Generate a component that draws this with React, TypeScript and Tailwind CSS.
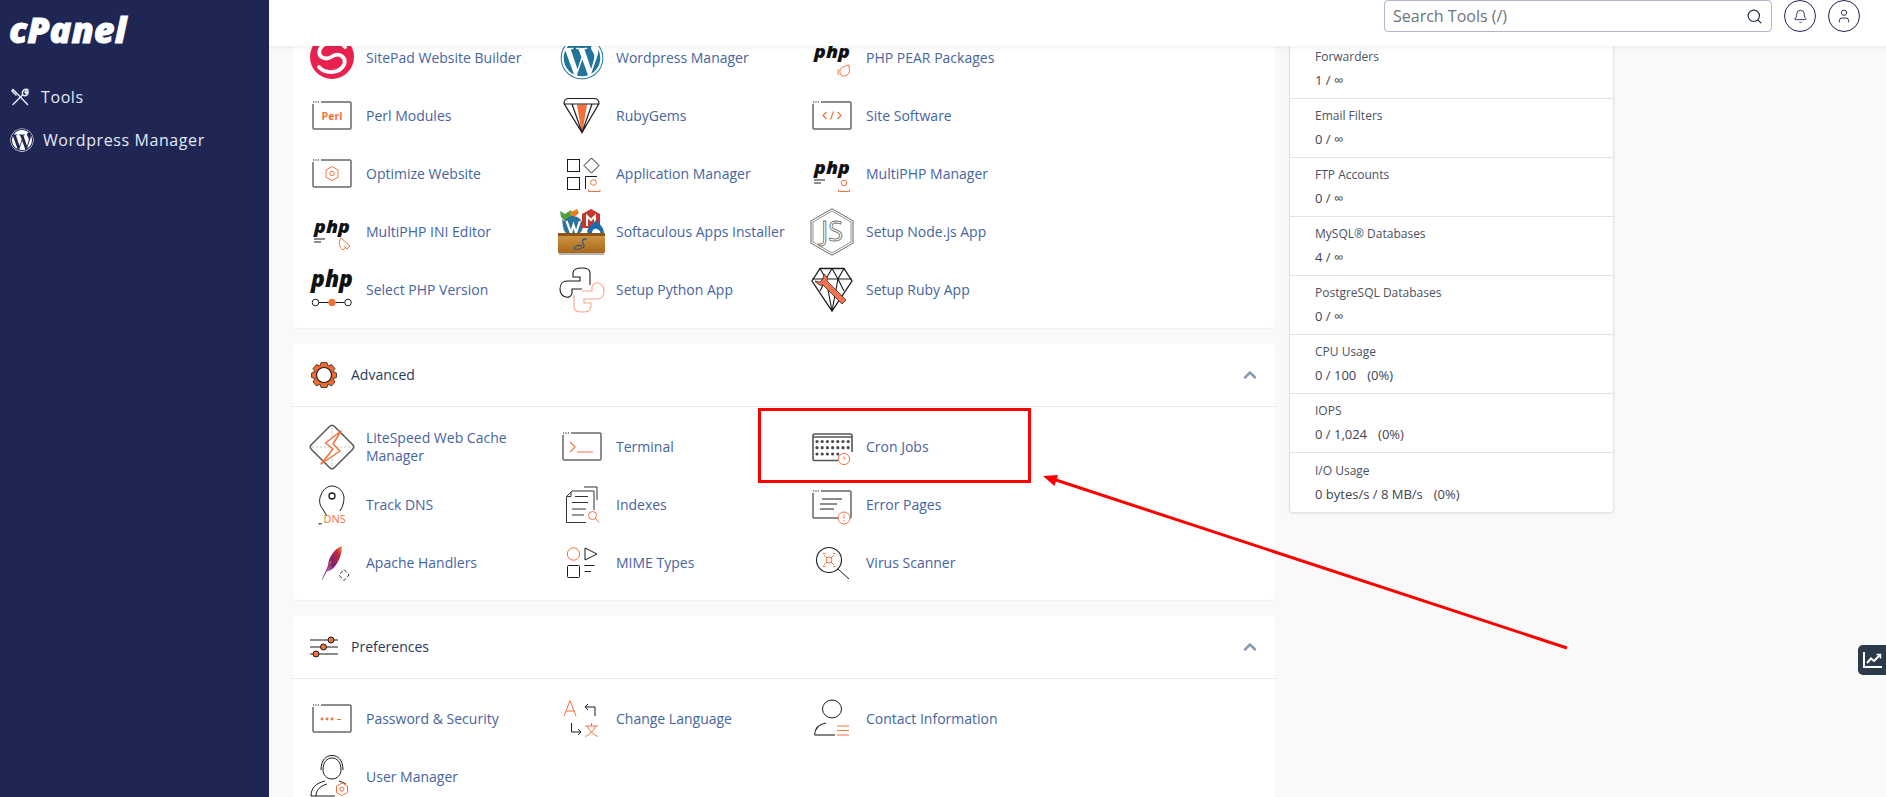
import { Bell, ChevronUp, Search, User } from "lucide-react";
import type { ReactNode } from "react";
import { FaWordpress } from "react-icons/fa";

const ORANGE = "#f4713c";
const INK = "#1b1b1b";

function Icon({ children }: { children: ReactNode }) {
  return (
    <svg width="48" height="48" viewBox="0 0 48 48" fill="none" stroke={INK} strokeWidth="1" className="shrink-0">
      {children}
    </svg>
  );
}

// window frame with the three dots at its top left, used by many tools
function WindowIcon({ children }: { children?: ReactNode }) {
  return (
    <Icon>
      <path d="M13 10H42.5Q43 10 43 10.5V36.5Q43 37 42.5 37H5.5Q5 37 5 36.5V12" />
      <path d="M5 10H12" strokeDasharray="1.2 1.2" />
      {children}
    </Icon>
  );
}

function PhpText({ size = 17, width = 36, x = 6, y = 24 }: { size?: number; width?: number; x?: number; y?: number }) {
  return (
    <text x={x} y={y} textLength={width} lengthAdjust="spacingAndGlyphs" fontFamily="'Open Sans', sans-serif" fontStyle="italic" fontWeight="800" fontSize={size} fill="#111" stroke="none">
      php
    </text>
  );
}

const SitePadIcon = () => (
  <Icon>
    <circle cx="24" cy="23" r="22" fill="#e8214f" stroke="none" />
    <path d="M11 33C17 40 31 40 36 31C39 23 31 18 24 22.5C17 27 9 23 12 15C17 6 31 6 37 13" stroke="#fff" strokeWidth="3.800" strokeLinecap="round" />
  </Icon>
);

const WordpressIcon = () => (
  <div className="flex h-12 w-12 shrink-0 items-center justify-center text-[#21759b]">
    <FaWordpress size={44} />
  </div>
);

const PerlIcon = () => (
  <WindowIcon>
    <text x="24" y="27.500" textAnchor="middle" fontFamily="'Open Sans', sans-serif" fontWeight="700" fontSize="10.500" fill={ORANGE} stroke="none">Perl</text>
  </WindowIcon>
);

const RubyGemsIcon = () => (
  <Icon>
    <path d="M19 12.500H29L24.500 40H23.500Z" fill={ORANGE} stroke="none" />
    <path d="M11 6.500H36Q41 6.500 41 11.500L24 40.500L6 11.500Q6 6.500 11 6.500ZM6 12H41M14 12L24 40.500L34 12" strokeWidth="1.200" />
  </Icon>
);

const SoftwareIcon = () => (
  <WindowIcon>
    <path d="M18.500 20L15 23.500L18.500 27M29.500 20L33 23.500L29.500 27M25.500 19.500L22.500 27.500" stroke={ORANGE} strokeWidth="1.200" />
  </WindowIcon>
);

const OptimizeIcon = () => (
  <WindowIcon>
    <path d="M24 16.500L30 20V27L24 30.500L18 27V20Z" stroke={ORANGE} strokeLinejoin="round" />
    <circle cx="24" cy="23.500" r="2.200" stroke={ORANGE} />
  </WindowIcon>
);

const AppManagerIcon = () => (
  <Icon>
    <rect x="9.500" y="9.500" width="12" height="12" />
    <rect x="9.500" y="27.500" width="12" height="12" />
    <path d="M33.500 8L41 15.500L33.500 23L26 15.500Z" />
    <path d="M27.500 39V26.500H39" />
    <circle cx="35.500" cy="32.500" r="2.800" stroke={ORANGE} />
    <path d="M30.500 39.500V41.500H42V39.500" stroke={ORANGE} />
  </Icon>
);

const PearIcon = () => (
  <Icon>
    <PhpText y={24} />
    <path d="M41 31C38 31 37 33 35 33C32 34 31 38 33 41C35 43 39 42 41 39C42 37 41 34 41 31Z" stroke={ORANGE} />
    <path d="M31 35C29.500 37 29.500 39 31 41" stroke={ORANGE} />
  </Icon>
);

const MultiManagerIcon = () => (
  <Icon>
    <PhpText y={24} />
    <path d="M6 30H17M6 33H13" />
    <circle cx="36" cy="33" r="2.800" stroke={ORANGE} />
    <path d="M30.500 39.500V41.500H41.500V39.500" stroke={ORANGE} />
  </Icon>
);

const IniIcon = () => (
  <Icon>
    <PhpText y={25} />
    <path d="M6 31H17M6 34H13" />
    <path d="M33 30L42 38L39 41L36 38M33 30C30 34 31 39 35 42L37 40" stroke={ORANGE} />
  </Icon>
);

const SoftaculousIcon = () => (
  <svg width="48" height="48" viewBox="0 0 48 48" className="shrink-0">
    <defs>
      <linearGradient id="softBox" x1="0" y1="0" x2="0" y2="1">
        <stop offset="0" stopColor="#d49a45" />
        <stop offset="1" stopColor="#a8681d" />
      </linearGradient>
    </defs>
    <path d="M2 3L7 6L13 2L15 8L11 11L7 13L3 9Z" fill="#4da23c" />
    <path d="M11 5L19 1L21 5L15 10Z" fill="#e67d25" />
    <path d="M4 11L8 15L5 19Z" fill="#2d6f9e" />
    <circle cx="15" cy="18" r="10" fill="#2d6f9e" />
    <path d="M8.500 13L13 25L15.500 17L18 25L22 13" fill="none" stroke="#fff" strokeWidth="2.200" />
    <path d="M33 1L42 6V20H24V6Z" fill="#c8352f" />
    <path d="M29 18V8L33 12L37 8V18" fill="none" stroke="#fff" strokeWidth="2" />
    <path d="M30 27C27 19 34 18 38 12C40 15 47 19 46 27Z" fill="#1f6aa8" />
    <path d="M34 25C34 21 37 20 39 21C42 22 43 24 42 26Z" fill="#fff" />
    <rect x="0" y="25" width="47" height="20" rx="1" fill="url(#softBox)" />
    <rect x="0" y="25" width="47" height="3" fill="#8c5516" />
    <rect x="1" y="45" width="45" height="2" fill="#b5b5b5" />
    <path d="M29 31C23 30 24 35 26 37C27 39 22 42 17 41C14 40 19 36 24 38" fill="none" stroke="#33507f" strokeWidth="1.100" />
  </svg>
);

const NodeIcon = () => (
  <Icon>
    <path d="M24 0.800L45 12.800V35.200L24 47.200L3 35.200V12.800Z" stroke="#555" strokeWidth="0.900" strokeLinejoin="round" />
    <path d="M24 3L43 14V34L24 45L5 34V14Z" stroke="#777" strokeWidth="0.800" strokeLinejoin="round" />
    <text x="24" y="33" textAnchor="middle" fontFamily="'Open Sans', sans-serif" fontWeight="400" fontSize="27" stroke="#666" strokeWidth="0.800" fill="#fff">JS</text>
  </Icon>
);

const SelectPhpIcon = () => (
  <Icon>
    <PhpText size={22} width={42} x={3} y={21} />
    <path d="M11 36.500H20.500M27.500 36.500H36.500" />
    <circle cx="7.500" cy="36.500" r="3.300" />
    <circle cx="24" cy="36.500" r="3.300" fill={ORANGE} stroke={ORANGE} />
    <circle cx="40" cy="36.500" r="3.300" />
  </Icon>
);

const PythonIcon = () => (
  <Icon>
    <path d="M24 23H14V27C14 30 10 32 8 31C4 30 2 27 2 23C2 18 5 15 9 15H22V11H15V7C15 4 18 2 24 2C30 2 32 4 32 7V19" strokeWidth="1.100" />
    <path d="M24 25H34V21C34 18 38 16 40 17C44 18 46 21 46 25C46 30 43 33 39 33H26V37H33V41C33 44 30 46 24 46C18 46 16 44 16 41V29" stroke="#f9a58a" strokeWidth="1.100" />
  </Icon>
);

const RubyWrenchIcon = () => (
  <Icon>
    <path d="M12 2.500H36L44 15L24 45L4 15Z" strokeWidth="1.300" />
    <path d="M4 13H44M12 2.500L18 13L24 45L30 13L36 2.500M24 2.500L18 13M24 2.500L30 13M18 13L12 25M30 13L36 25" strokeWidth="1.100" />
    <path d="M16 8C19 10 20 13 19 15L38 34L34 38L15 19C12 20 9 18 7 15L12 16L15 13Z" fill="#f4724f" stroke={INK} strokeWidth="0.700" />
  </Icon>
);

const LiteSpeedIcon = () => (
  <Icon>
    <path d="M3.500 21.500L21.500 3.500Q24 1 26.500 3.500L44.500 21.500Q47 24 44.500 26.500L26.500 44.500Q24 47 21.500 44.500L3.500 26.500Q1 24 3.500 21.500Z" stroke="#555" strokeWidth="1.500" />
    <path d="M4 24H44M24 4V44" stroke="#c8c8c8" strokeDasharray="2.500 1.500" strokeWidth="1.100" />
    <path d="M33 8L17.500 20L25 26L13 41L32 28L25 21Z" fill="#fff" stroke={ORANGE} strokeWidth="1.500" strokeLinejoin="round" />
  </Icon>
);

const TerminalIcon = () => (
  <WindowIcon>
    <path d="M12 19L17 24L12 29M19 29H35" stroke={ORANGE} strokeWidth="1.100" />
  </WindowIcon>
);

const CronIcon = () => (
  <Icon>
    <path d="M5 31V12.500Q5 11 6.500 11H42.500Q44 11 44 12.500V29M5 14H44M5 31V36Q5 37.500 6.500 37.500H30" stroke="#555" strokeWidth="1.600" />
    {[18.5, 24.7, 31].map((cy, row) =>
      [9, 14.2, 19.4, 24.6, 29.800, 35, 40.200].slice(0, row === 2 ? 5 : 7).map((cx) => (
        <circle key={`${cx}-${cy}`} cx={cx} cy={cy} r="1.600" fill="#4a4a4a" stroke="none" />
      )),
    )}
    <circle cx="36" cy="36" r="5.600" fill="#fff" stroke={ORANGE} />
    <path d="M35.500 33.500L37 36.500" stroke={ORANGE} />
  </Icon>
);

const DnsIcon = () => (
  <Icon>
    <path d="M19 35L14 27C11 23 11 18 13 14C15 8 20 5 24 5C29 5 35 9 36 16C36 21 35 25 32 30" />
    <circle cx="24" cy="15" r="3" strokeWidth="1.300" />
    <rect x="10.500" y="42" width="3" height="1.500" fill="#555" stroke="none" />
    <text x="15.500" y="42" fontFamily="'Open Sans', sans-serif" fontSize="11" fill={ORANGE} stroke="none">DNS</text>
  </Icon>
);

const IndexesIcon = () => (
  <Icon>
    <path d="M14 10H36V29M14 10L8.500 15.500V41.500H28" stroke="#333" />
    <path d="M26 6H39V19" stroke="#333" />
    <path d="M17 15.500H30M14 21.500H30M14 28H28M14 34H26M9 15.500H13V11" stroke="#333" />
    <circle cx="34.500" cy="34.500" r="4" stroke={ORANGE} />
    <path d="M37.500 37.500L41 41.500" stroke={ORANGE} />
  </Icon>
);

const ErrorPagesIcon = () => (
  <WindowIcon>
    <path d="M14 18H34M12 23H29M12 28H26" />
    <circle cx="36" cy="37" r="6" fill="#fff" stroke={ORANGE} />
    <path d="M36 33.500V37.500M36 39V40.500" stroke={ORANGE} />
  </WindowIcon>
);

const ApacheIcon = () => (
  <svg width="48" height="48" viewBox="0 0 48 48" className="shrink-0">
    <defs>
      <linearGradient id="feather" x1="1" y1="0" x2="0" y2="1">
        <stop offset="0" stopColor="#f5a623" />
        <stop offset="0.250" stopColor="#c9293c" />
        <stop offset="0.650" stopColor="#7e1f6e" />
        <stop offset="1" stopColor="#a78bc0" />
      </linearGradient>
    </defs>
    <path d="M34 7C26 10 21 18 20 26L18 33L23 31C30 26 34 16 34 7Z" fill="url(#feather)" />
    <path d="M23 22L14 41" stroke="url(#feather)" strokeWidth="1" fill="none" />
    <path d="M36 30.500L41 36L36 41.500L31 36Z" fill="none" stroke="#333" strokeWidth="1" strokeDasharray="4 2" />
  </svg>
);

const MimeIcon = () => (
  <Icon>
    <circle cx="15.500" cy="15" r="6.200" stroke={ORANGE} />
    <path d="M27 9L39 15L27 21Z" />
    <rect x="9.500" y="26.500" width="12" height="12" rx="1" />
    <path d="M26.500 26.500H36.500M26.500 32.500H33" />
  </Icon>
);

const VirusIcon = () => (
  <Icon>
    <circle cx="21" cy="21" r="12.500" strokeWidth="1.100" />
    <path d="M30 30L41 40" />
    <circle cx="21" cy="21" r="3" stroke={ORANGE} />
    <path d="M16 16L19 19M26 16L23 19M16 26L19 23M26 26L23 23M15 14.500H17.500M25 14.500H27.500M15 27.500H17.500M25 27.500H27.500" stroke={ORANGE} />
  </Icon>
);

const PasswordIcon = () => (
  <WindowIcon>
    <circle cx="14" cy="24" r="1.400" fill={ORANGE} stroke="none" />
    <circle cx="19" cy="24" r="1.400" fill={ORANGE} stroke="none" />
    <circle cx="24" cy="24" r="1.400" fill={ORANGE} stroke="none" />
    <path d="M29 24.500H33" stroke={ORANGE} />
  </WindowIcon>
);

const LanguageIcon = () => (
  <Icon>
    <path d="M6 21L12 5.500L18 21M8 16H16" stroke={ORANGE} />
    <path d="M37 21V12H27.500M30 9L27 12L30 15" />
    <path d="M13.500 28V37H23M20 34L23 37L20 40" />
    <path d="M27 31H40M33.500 28V31M29.500 31C31 36 36 40 40 41.500M37.500 31C36 36 31 40 27 41.500" stroke={ORANGE} />
  </Icon>
);

const ContactIcon = () => (
  <Icon>
    <ellipse cx="24" cy="14" rx="9.500" ry="9" />
    <path d="M6.500 40C7 33 12 29 18 28" strokeWidth="1.100" />
    <path d="M6.500 40H27" stroke="#666" strokeWidth="1.600" />
    <path d="M29 31H41M29 35.500H41M29 40H41" stroke={ORANGE} />
  </Icon>
);

const UserManagerIcon = () => (
  <Icon>
    <path d="M15 17C15 9 19 5 24 5C29 5 33 9 33 17C33 21 30 26 24 26C18 26 15 21 15 17Z" />
    <path d="M13 17C13 7 18 2.500 24 2.500C30 2.500 35 7 35 17" />
    <path d="M3 43C3 35 8 30 17 28M8 43C8 37 12 33 19 31M3 43H27M31 28C34 29 36 30 38 31" />
    <path d="M34 30L39.500 33V39.500L34 42.500L28.500 39.500V33Z" fill="#fff" stroke={ORANGE} />
    <circle cx="34" cy="36.200" r="2" stroke={ORANGE} />
  </Icon>
);

type Tool = { name: string; icon: ReactNode };

const softwareTools: Tool[] = [
  { name: "SitePad Website Builder", icon: <SitePadIcon /> },
  { name: "Wordpress Manager", icon: <WordpressIcon /> },
  { name: "PHP PEAR Packages", icon: <PearIcon /> },
  { name: "Perl Modules", icon: <PerlIcon /> },
  { name: "RubyGems", icon: <RubyGemsIcon /> },
  { name: "Site Software", icon: <SoftwareIcon /> },
  { name: "Optimize Website", icon: <OptimizeIcon /> },
  { name: "Application Manager", icon: <AppManagerIcon /> },
  { name: "MultiPHP Manager", icon: <MultiManagerIcon /> },
  { name: "MultiPHP INI Editor", icon: <IniIcon /> },
  { name: "Softaculous Apps Installer", icon: <SoftaculousIcon /> },
  { name: "Setup Node.js App", icon: <NodeIcon /> },
  { name: "Select PHP Version", icon: <SelectPhpIcon /> },
  { name: "Setup Python App", icon: <PythonIcon /> },
  { name: "Setup Ruby App", icon: <RubyWrenchIcon /> },
];

const advancedTools: Tool[] = [
  { name: "LiteSpeed Web Cache Manager", icon: <LiteSpeedIcon /> },
  { name: "Terminal", icon: <TerminalIcon /> },
  { name: "Cron Jobs", icon: <CronIcon /> },
  { name: "Track DNS", icon: <DnsIcon /> },
  { name: "Indexes", icon: <IndexesIcon /> },
  { name: "Error Pages", icon: <ErrorPagesIcon /> },
  { name: "Apache Handlers", icon: <ApacheIcon /> },
  { name: "MIME Types", icon: <MimeIcon /> },
  { name: "Virus Scanner", icon: <VirusIcon /> },
];

const preferenceTools: Tool[] = [
  { name: "Password & Security", icon: <PasswordIcon /> },
  { name: "Change Language", icon: <LanguageIcon /> },
  { name: "Contact Information", icon: <ContactIcon /> },
  { name: "User Manager", icon: <UserManagerIcon /> },
];

const stats = [
  { label: "Forwarders", value: "1 / ∞" },
  { label: "Email Filters", value: "0 / ∞" },
  { label: "FTP Accounts", value: "0 / ∞" },
  { label: "MySQL® Databases", value: "4 / ∞" },
  { label: "PostgreSQL Databases", value: "0 / ∞" },
  { label: "CPU Usage", value: "0 / 100", percent: "(0%)" },
  { label: "IOPS", value: "0 / 1,024", percent: "(0%)" },
  { label: "I/O Usage", value: "0 bytes/s / 8 MB/s", percent: "(0%)" },
];

function ToolGrid({ tools }: { tools: Tool[] }) {
  return (
    <div className="grid grid-cols-[repeat(3,250px)] auto-rows-[58px] px-[15px]">
      {tools.map((tool) => (
        <div key={tool.name} className="flex items-center gap-[10px]">
          {tool.icon}
          <span className="text-sm leading-[18px] text-[#46649f]">{tool.name}</span>
        </div>
      ))}
    </div>
  );
}

function Section({ title, icon, tools }: { title: string; icon: ReactNode; tools: Tool[] }) {
  return (
    <section className="rounded-[4px] bg-white pb-[8px] shadow-[0_1px_2px_rgba(0,0,0,0.04)]">
      <div className="flex h-[63px] items-center border-b border-[#e3e9f0] pl-[17px] pr-[15px]">
        <div className="flex w-[28px] justify-center">{icon}</div>
        <span className="ml-[13px] text-sm text-[#293a5a]">{title}</span>
        <ChevronUp size={20} strokeWidth={3} className="ml-auto text-[#8a9bb5]" />
      </div>
      <div className="pt-[11px]">
        <ToolGrid tools={tools} />
      </div>
    </section>
  );
}

export default function App() {
  return (
    <div className="relative flex h-[797px] w-[1886px] overflow-hidden bg-[#f9f9f9] font-['Open_Sans',sans-serif]">
      <aside className="flex w-[269px] shrink-0 flex-col bg-[#1f2654] pl-[9px]">
        <div className="mt-[11px] h-[64px] text-[36px] font-extrabold italic leading-[38px] tracking-[0px] text-white [-webkit-text-stroke:0.8px_white]">cPanel</div>
        <div className="flex h-[43px] items-center gap-[12px] pl-[2px] text-base tracking-[0.6px] text-[#e3e8f4]">
          <svg width="18" height="18" viewBox="0 0 18 18" fill="none" stroke="#e3e8f4" strokeWidth="1.500" strokeLinecap="round">
            <path d="M2 1.500L6 5.500L16.500 16.500M2 1.500L1 3L5 7" />
            <path d="M2 16.500L11 7.500M12 3C13 1.500 15 1 16.500 1.500L14 4L15 5.500L17 3.500C17.500 5 16.500 7 15 7.500C13 8 12 7 12 7C11 5.500 11 4.500 12 3Z" />
          </svg>
          Tools
        </div>
        <div className="flex h-[43px] items-center gap-[9px] pl-[1px] text-base tracking-[0.6px] text-[#e3e8f4]">
          <FaWordpress size={24} className="text-white" />
          Wordpress Manager
        </div>
      </aside>

      <div className="flex min-w-0 flex-1 flex-col">
        <header className="relative z-10 flex h-[46px] shrink-0 items-start justify-end bg-white pr-[26px] shadow-[0_2px_6px_rgba(0,0,0,0.06)]">
          <div className="flex h-[32px] w-[388px] items-center justify-between rounded-[4px] border border-[#b4b7c9] pl-[8px] pr-[8px]">
            <span className="text-base text-[#6c757d]">Search Tools (/)</span>
            <Search size={17} strokeWidth={1.6} className="text-[#1c2b3a]" />
          </div>
          <div className="ml-[12px] flex h-[32px] w-[32px] items-center justify-center rounded-full border border-[#1f2654]">
            <Bell size={15} strokeWidth={1.4} className="text-[#1f2654]" />
          </div>
          <div className="ml-[12px] flex h-[32px] w-[32px] items-center justify-center rounded-full border border-[#1f2654]">
            <User size={16} strokeWidth={1.4} className="text-[#1f2654]" />
          </div>
        </header>

        <main className="flex flex-1 items-start gap-[14px] overflow-hidden pl-[24px]">
          <div className="-mt-[17px] flex w-[982px] shrink-0 flex-col gap-[16px]">
            <section className="rounded-[4px] bg-white pb-[9px] shadow-[0_1px_2px_rgba(0,0,0,0.04)]">
              <ToolGrid tools={softwareTools} />
            </section>
            <Section
              title="Advanced"
              tools={advancedTools}
              icon={
                <svg width="28" height="28" viewBox="0 0 28 28">
                  <path d="M11 1.500H17L18 5L21.500 3.500L25 7.500L23 10.500L26.500 12V16.500L23 17.500L25 21L21.500 25L18 23L17 26.500H11L10 23L6.500 25L3 21L5 17.500L1.500 16.500V12L5 10.500L3 7.500L6.500 3.500L10 5Z" fill="#f0692c" stroke="#2a2a2a" strokeWidth="0.800" strokeLinejoin="round" />
                  <circle cx="14" cy="14" r="7.500" fill="#fff" stroke="#1b1b1b" strokeWidth="1.200" />
                </svg>
              }
            />
            <Section
              title="Preferences"
              tools={preferenceTools}
              icon={
                <svg width="28" height="28" viewBox="0 0 28 28" stroke="#1b1b1b" strokeWidth="1">
                  <path d="M0 7H28M0 14H28M0 21H28" />
                  <circle cx="21" cy="7" r="3" fill={ORANGE} />
                  <circle cx="13.500" cy="14" r="3" fill={ORANGE} />
                  <circle cx="6" cy="21" r="3" fill={ORANGE} />
                </svg>
              }
            />
          </div>

          <div className="-mt-[6px] w-[325px] shrink-0 rounded-[4px] border-x border-b border-[#e4e4e4] bg-white shadow-[0_1px_3px_rgba(0,0,0,0.08)]">
            {stats.map((s, i) => (
              <div key={s.label} className={`flex h-[59px] flex-col justify-center pb-[1px] pl-[25px] ${i < stats.length - 1 ? "border-b border-[#e2e2e2]" : ""}`}>
                <div className="text-xs font-medium leading-[16px] text-[#4a5160]">{s.label}</div>
                <div className="mt-[7px] text-[13px] leading-[16px] text-[#3f4450]">
                  {s.value}
                  {s.percent && <span className="ml-[11px]">{s.percent}</span>}
                </div>
              </div>
            ))}
          </div>
        </main>
      </div>

      {/* red annotation over the screenshot */}
      <div className="pointer-events-none absolute left-[758px] top-[408px] h-[75px] w-[273px] border-[3px] border-[#ff0000]" />
      <svg className="pointer-events-none absolute left-0 top-0" width="1886" height="797">
        <path d="M1567 648L1056 480" stroke="#ff0000" strokeWidth="3" />
        <path d="M1043 476L1058 475L1054.500 486Z" fill="#ff0000" />
      </svg>

      <div className="absolute right-0 top-[645px] flex h-[30px] w-[28px] items-center justify-center rounded-l-[5px] bg-[#2b3a4a]">
        <svg width="22" height="22" viewBox="0 0 22 22" fill="none" stroke="#fff" strokeWidth="2">
          <path d="M3 3V18H21" />
          <path d="M6 14L10 9.500L13 12L19 6" />
          <path d="M15.500 5.500H19.500V9.500" strokeWidth="1.500" />
        </svg>
      </div>
    </div>
  );
}
